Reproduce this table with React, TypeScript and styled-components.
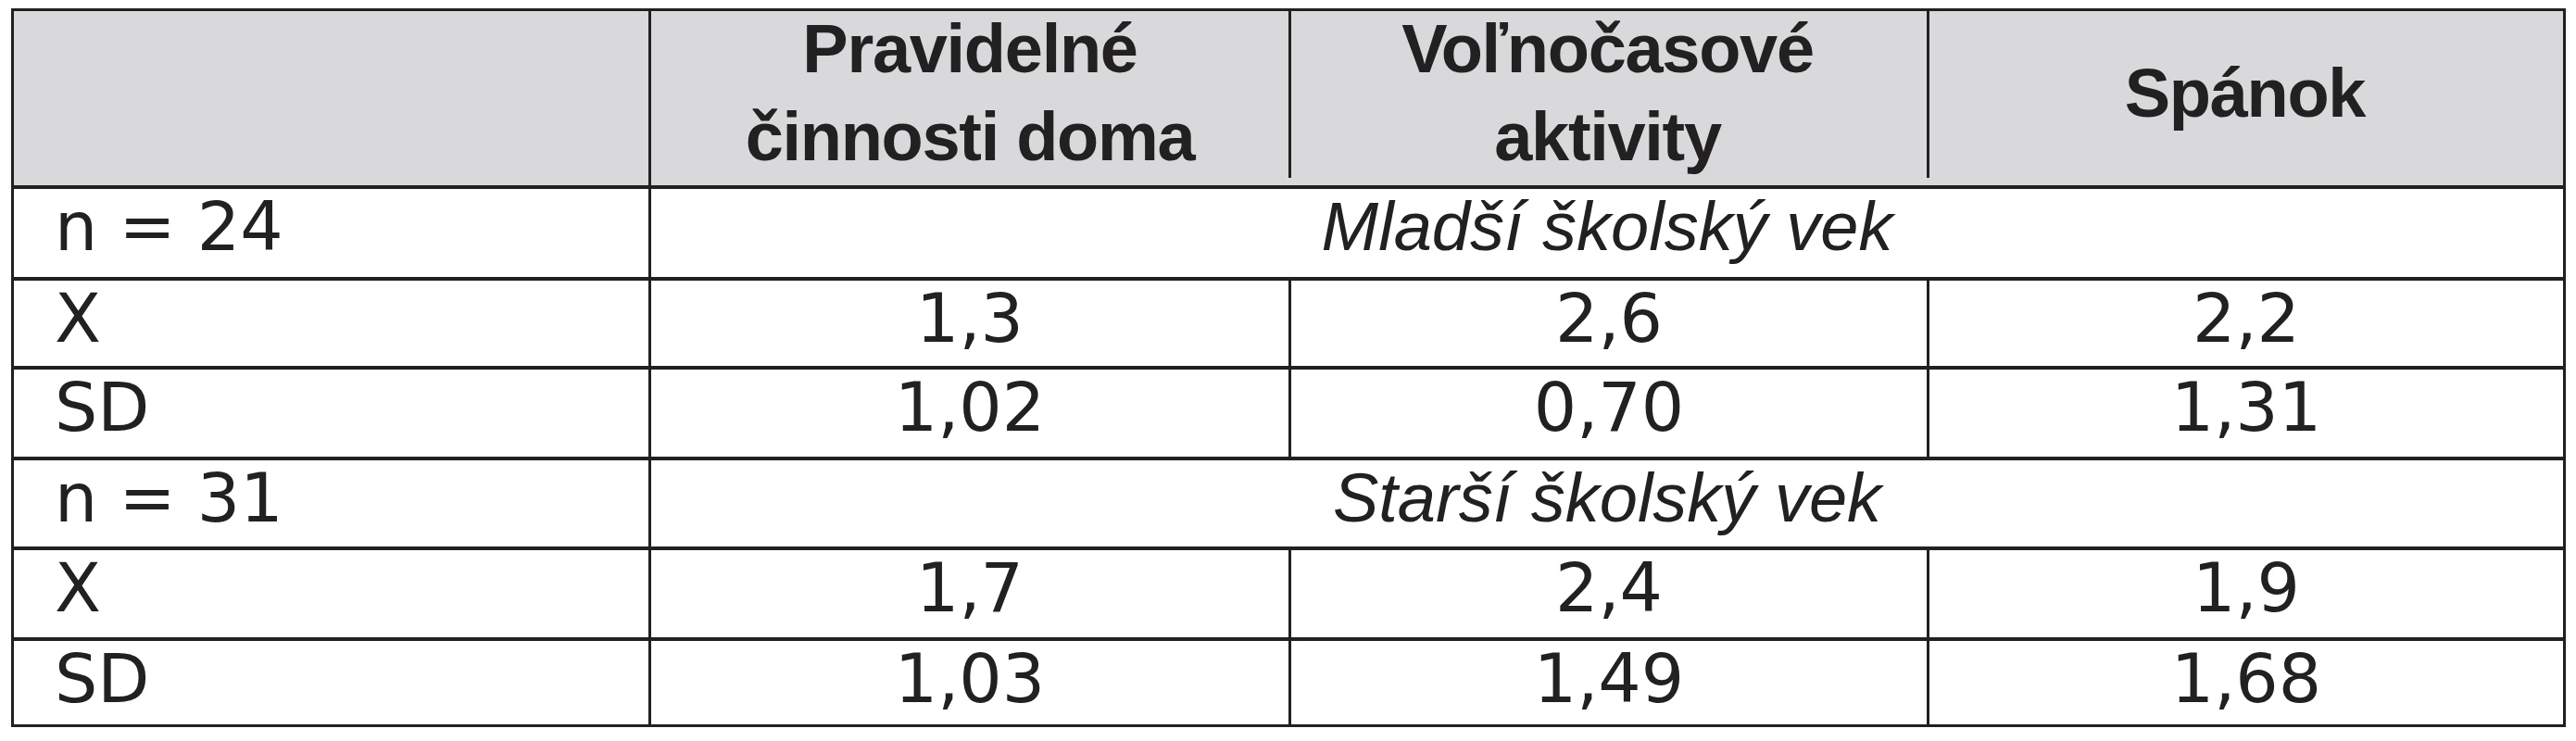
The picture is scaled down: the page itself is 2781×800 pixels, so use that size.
import React from 'react';
import styled, { createGlobalStyle } from 'styled-components';

const ink = '#222021';

const GlobalStyle = createGlobalStyle`
  *, *::before, *::after {
    box-sizing: border-box;
  }
  html, body {
    margin: 0;
    padding: 0;
    background: #ffffff;
  }
`;

const Page = styled.div`
  padding: 9px 11px 0 12px;
  width: 2781px;
  height: 800px;
  background: #ffffff;
`;

const Table = styled.div`
  display: grid;
  grid-template-columns: 685px 691px 689px 687px;
  grid-template-rows: 188px 99px 96px 98px 97px 98px 94px;
  width: 2758px;
  border: 3px solid ${ink};
  color: ${ink};
`;

type Rule = 'none' | 'full' | 'short';

const HeadCell = styled.div<{ $rule: Rule }>`
  display: flex;
  flex-direction: column;
  align-items: center;
  justify-content: center;
  padding-bottom: 12px;
  background-color: #d9d9db;
  border-left: ${({ $rule }) => ($rule === 'full' ? `3px solid ${ink}` : 'none')};
  background-image: ${({ $rule }) =>
    $rule === 'short' ? `linear-gradient(${ink}, ${ink})` : 'none'};
  background-size: 3px calc(100% - 8px);
  background-repeat: no-repeat;
  font-family: 'Liberation Sans', Arial, sans-serif;
  font-weight: 700;
  font-size: 74px;
  line-height: 95px;
  letter-spacing: -1.3px;
  text-align: center;
  white-space: nowrap;
`;

const LabelCell = styled.div`
  border-top: 4px solid ${ink};
  padding: 4px 0 0 44px;
  font-family: 'DejaVu Sans', 'Liberation Sans', sans-serif;
  font-size: 73px;
  line-height: 73px;
  white-space: nowrap;
`;

const ValueCell = styled.div`
  border-top: 4px solid ${ink};
  border-left: 3px solid ${ink};
  padding-top: 4px;
  font-family: 'DejaVu Sans', 'Liberation Sans', sans-serif;
  font-size: 73px;
  line-height: 73px;
  text-align: center;
  white-space: nowrap;
`;

const GroupCell = styled.div`
  grid-column: span 3;
  border-top: 4px solid ${ink};
  border-left: 3px solid ${ink};
  padding-top: 4px;
  font-family: 'Liberation Sans', Arial, sans-serif;
  font-style: italic;
  font-size: 74px;
  line-height: 73px;
  text-align: center;
  white-space: nowrap;
`;

const headers: { lines: string[]; rule: Rule }[] = [
  { lines: ['Pravidelné', 'činnosti doma'], rule: 'full' },
  { lines: ['Voľnočasové', 'aktivity'], rule: 'short' },
  { lines: ['Spánok'], rule: 'short' },
];

const groups = [
  {
    n: 'n = 24',
    title: 'Mladší školský vek',
    rows: [
      { label: 'X', values: ['1,3', '2,6', '2,2'] },
      { label: 'SD', values: ['1,02', '0,70', '1,31'] },
    ],
  },
  {
    n: 'n = 31',
    title: 'Starší školský vek',
    rows: [
      { label: 'X', values: ['1,7', '2,4', '1,9'] },
      { label: 'SD', values: ['1,03', '1,49', '1,68'] },
    ],
  },
];

const App: React.FC = () => {
  return (
    <Page>
      <GlobalStyle />
      <Table>
        <HeadCell $rule="none" />
        {headers.map((h) => (
          <HeadCell key={h.lines[0]} $rule={h.rule}>
            {h.lines.map((line) => (
              <span key={line}>{line}</span>
            ))}
          </HeadCell>
        ))}

        {groups.map((g) => (
          <React.Fragment key={g.n}>
            <LabelCell>{g.n}</LabelCell>
            <GroupCell>{g.title}</GroupCell>
            {g.rows.map((r) => (
              <React.Fragment key={g.n + r.label}>
                <LabelCell>{r.label}</LabelCell>
                {r.values.map((v, i) => (
                  <ValueCell key={i}>{v}</ValueCell>
                ))}
              </React.Fragment>
            ))}
          </React.Fragment>
        ))}
      </Table>
    </Page>
  );
};

export default App;
